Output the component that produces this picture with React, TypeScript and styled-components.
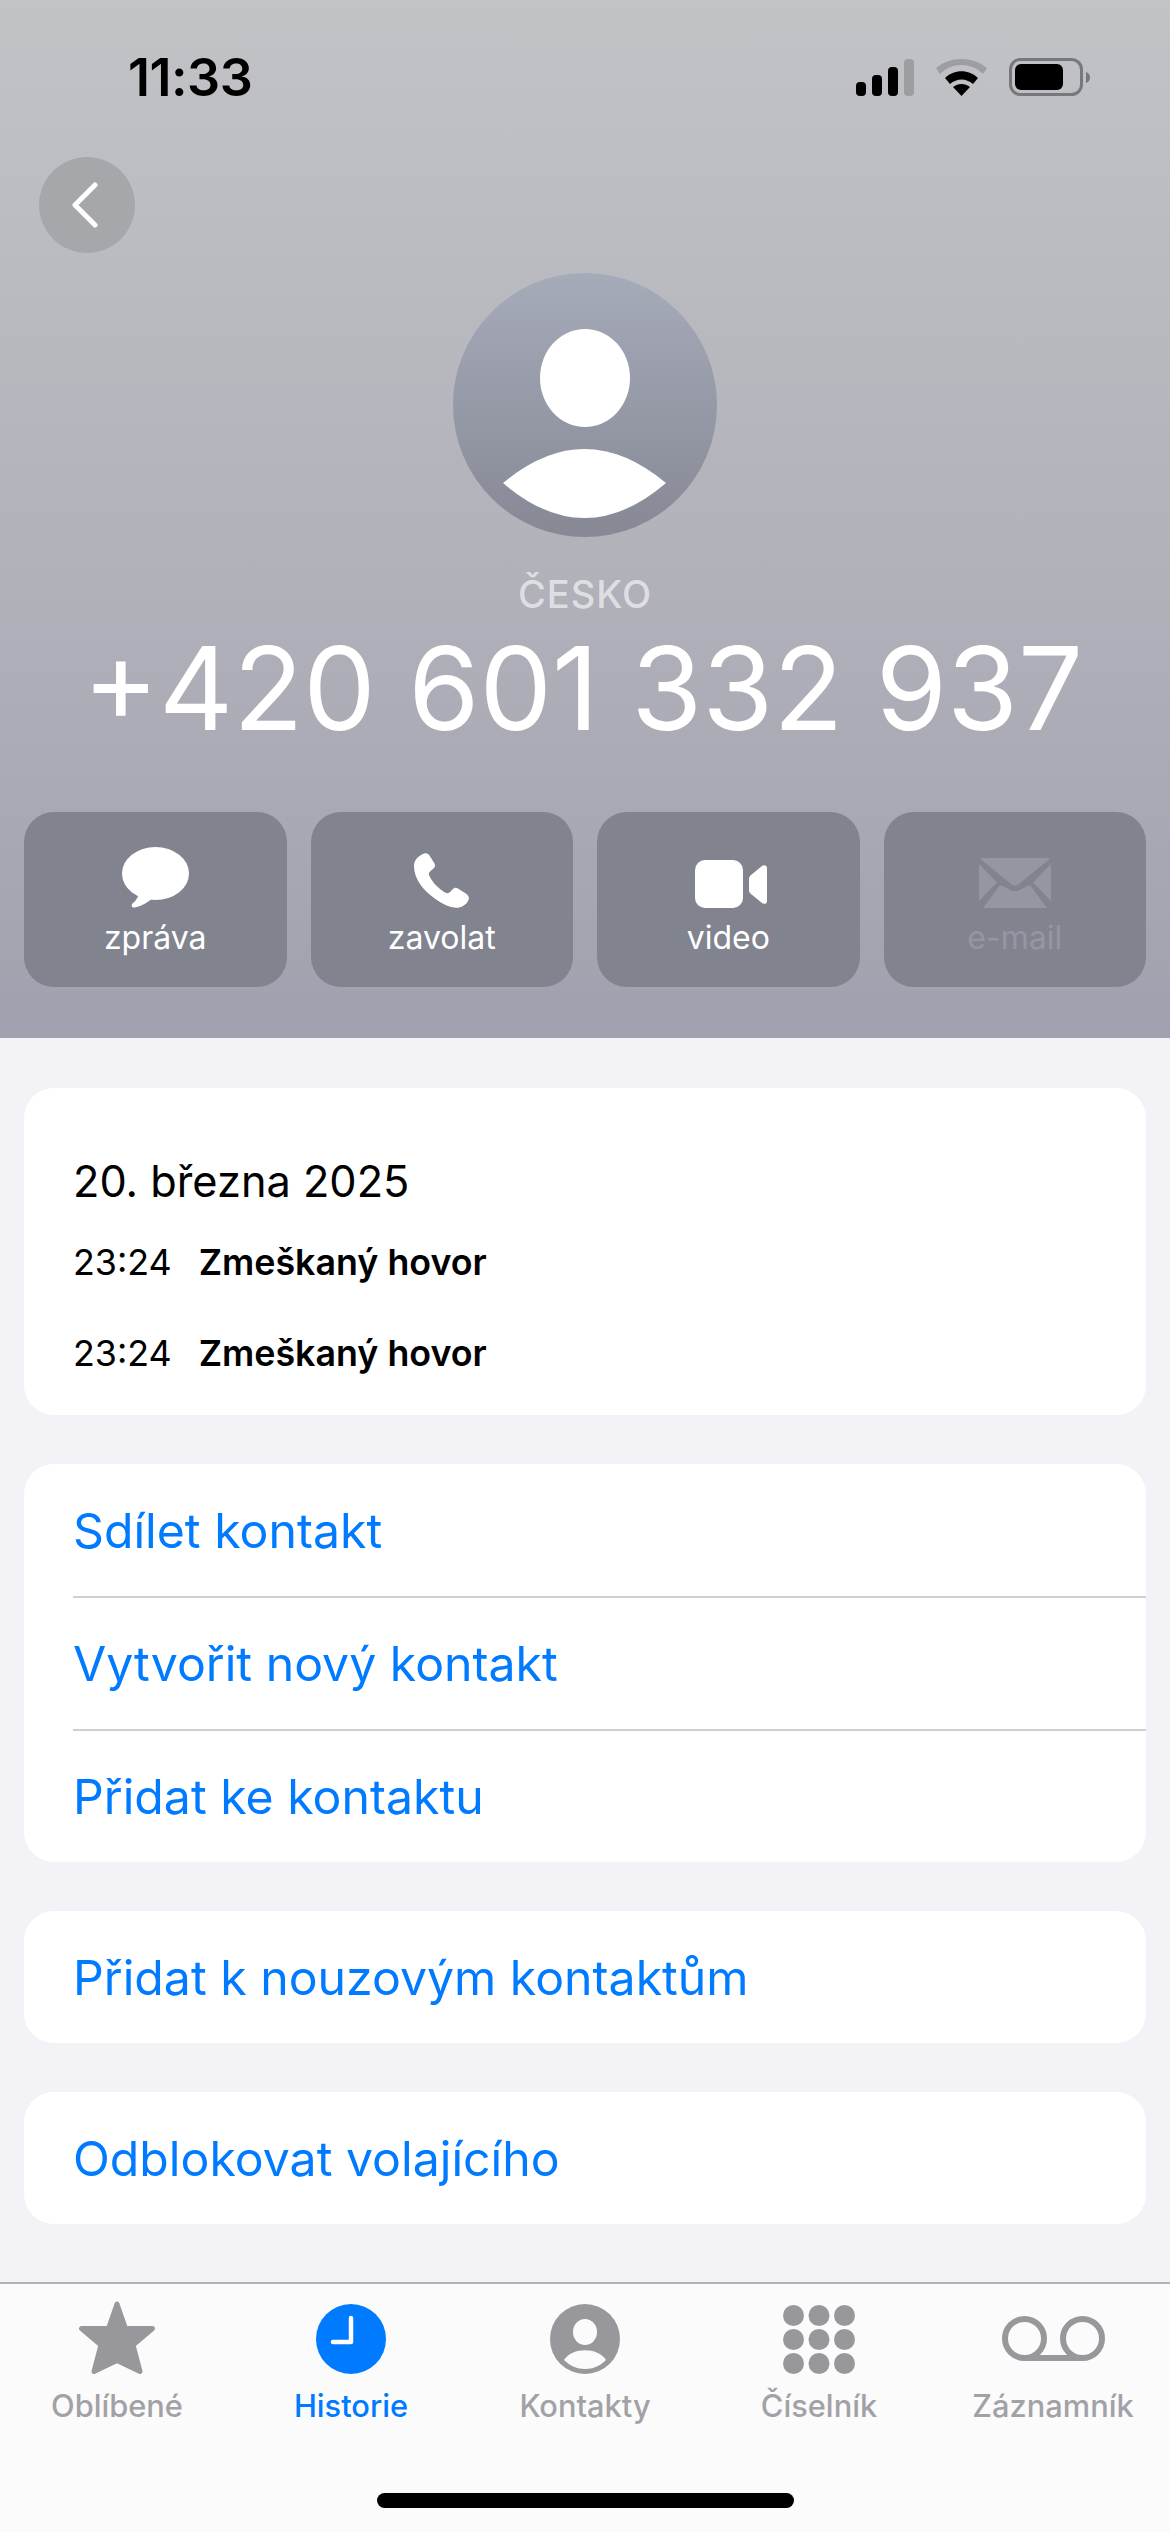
import styled, { createGlobalStyle } from 'styled-components';

const GlobalStyle = createGlobalStyle`
  html, body {
    margin: 0;
    padding: 0;
    background: #f2f2f7;
  }
  * {
    box-sizing: border-box;
  }
`;

const Screen = styled.div`
  width: 1170px;
  height: 2532px;
  display: flex;
  flex-direction: column;
  overflow: hidden;
  font-family: Inter, 'Liberation Sans', sans-serif;
  background: #f2f2f7;
`;

const Header = styled.header`
  height: 1038px;
  padding: 0 24px;
  flex-shrink: 0;
  display: flex;
  flex-direction: column;
  background: linear-gradient(180deg, #c2c3c7 0%, #b4b5bc 45%, #a0a1ae 100%);
`;

const StatusBar = styled.div`
  height: 157px;
  padding: 50px 55px 0 104px;
  display: flex;
  justify-content: space-between;
  align-items: flex-start;
`;

const Clock = styled.div`
  font-size: 52px;
  line-height: 56px;
  font-weight: 600;
  letter-spacing: -0.5px;
  color: #000;
`;

const StatusIcons = styled.div`
  display: flex;
  align-items: center;
  gap: 22px;
  margin-top: 8px;
`;

const BackButton = styled.div`
  width: 96px;
  height: 96px;
  margin-left: 15px;
  border-radius: 50%;
  background: #a6a7ab;
  display: flex;
  align-items: center;
  justify-content: center;
`;

const AvatarWrap = styled.div`
  margin-top: 20px;
  height: 264px;
  display: flex;
  justify-content: center;
`;

const Region = styled.div`
  margin-top: 34px;
  text-align: center;
  font-size: 38px;
  line-height: 46px;
  font-weight: 500;
  letter-spacing: 1px;
  color: rgba(255, 255, 255, 0.6);
`;

const PhoneNumber = styled.div`
  margin-top: 7px;
  margin-left: -4px;
  text-align: center;
  font-size: 115px;
  line-height: 130px;
  font-weight: 400;
  white-space: nowrap;
  color: #fff;
`;

const Actions = styled.div`
  margin-top: 58px;
  display: grid;
  grid-template-columns: repeat(4, 1fr);
  gap: 24px;
`;

const ActionButton = styled.div<{ $disabled?: boolean }>`
  height: 175px;
  border-radius: 30px;
  background: #81838f;
  display: flex;
  flex-direction: column;
  align-items: center;
  color: ${(p) => (p.$disabled ? '#9596a2' : '#fff')};
`;

const ActionIcon = styled.div`
  height: 96px;
  width: 100%;
  display: flex;
  align-items: flex-end;
  justify-content: center;
`;

const ActionLabel = styled.div`
  margin-top: 12px;
  font-size: 32px;
  line-height: 36px;
`;

const Main = styled.main`
  flex: 1;
  padding: 50px 24px 0;
  display: flex;
  flex-direction: column;
  gap: 49px;
`;

const Card = styled.section`
  background: #fff;
  border-radius: 30px;
  overflow: hidden;
`;

const HistoryCard = styled(Card)`
  height: 327px;
  padding: 67px 49px 0;
`;

const DateTitle = styled.div`
  font-size: 43.3px;
  line-height: 52px;
  color: #000;
  margin-bottom: 9px;
`;

const CallRow = styled.div`
  height: 91px;
  display: flex;
  align-items: center;
  gap: 27px;
  font-size: 35.8px;
`;

const CallTime = styled.span`
  color: #000;
`;

const CallType = styled.span`
  font-weight: 600;
  color: #000;
`;

const LinkRow = styled.div`
  height: 132px;
  margin-left: 49px;
  display: flex;
  align-items: center;
  font-size: 48.2px;
  color: #007aff;
  & + & {
    height: 133px;
    border-top: 2px solid #d0d0d3;
  }
`;

const TabBar = styled.nav`
  height: 250px;
  flex-shrink: 0;
  position: relative;
  background: #fbfbfc;
  border-top: 2px solid #b1b1b6;
  display: grid;
  grid-template-columns: repeat(5, 1fr);
`;

const Tab = styled.div<{ $active?: boolean }>`
  display: flex;
  flex-direction: column;
  align-items: center;
  color: ${(p) => (p.$active ? '#007aff' : '#a2a2a6')};
`;

const TabIcon = styled.div`
  height: 90px;
  width: 100%;
  display: flex;
  align-items: flex-end;
  justify-content: center;
`;

const TabLabel = styled.div`
  margin-top: 14px;
  font-size: 30.8px;
  line-height: 36px;
  font-weight: 500;
`;

const HomeBar = styled.div`
  position: absolute;
  left: 377px;
  bottom: 24px;
  width: 417px;
  height: 15px;
  border-radius: 8px;
  background: #000;
`;

const GRAY = '#98989c';

const SignalIcon = () => (
  <svg width="58" height="37" viewBox="0 0 58 37">
    <rect x="0" y="23" width="10" height="14" rx="4" fill="#000" />
    <rect x="16" y="16" width="10" height="21" rx="4" fill="#000" />
    <rect x="32" y="8" width="10" height="29" rx="4" fill="#000" />
    <rect x="48" y="0" width="10" height="37" rx="4" fill="#9d9ea2" />
  </svg>
);

const WifiIcon = () => (
  <svg width="51" height="37" viewBox="0 0 51 37">
    <path d="M0 9 C14 -3 37 -3 51 9 L47 15 C35 3 16 3 4 15 Z" fill="#9d9ea2" />
    <path d="M9 19 C18 10 33 10 42 19 L37 25 C30 19 21 19 14 25 Z" fill="#000" />
    <path d="M17 28 C22 24 29 24 34 28 L25.5 37 Z" fill="#000" />
  </svg>
);

const BatteryIcon = () => (
  <svg width="82" height="38" viewBox="0 0 82 38">
    <rect x="1.5" y="1.5" width="71" height="35" rx="10" fill="none" stroke="#77787c" strokeWidth="3" />
    <rect x="6" y="6" width="48" height="26" rx="6" fill="#000" />
    <path d="M77 14 C80 15 81 17 81 19.5 C81 22 80 24 77 25 Z" fill="#77787c" />
  </svg>
);

const ChevronIcon = () => (
  <svg width="30" height="50" viewBox="0 0 30 50">
    <path d="M23 5 L3 25 L23 45" fill="none" stroke="#fff" strokeWidth="5" strokeLinecap="round" strokeLinejoin="round" />
  </svg>
);

const AvatarIcon = () => (
  <svg width="264" height="264" viewBox="0 0 264 264">
    <defs>
      <linearGradient id="avatarFill" x1="0" y1="0" x2="0" y2="1">
        <stop offset="0" stopColor="#a6abba" />
        <stop offset="1" stopColor="#868894" />
      </linearGradient>
    </defs>
    <circle cx="132" cy="132" r="132" fill="url(#avatarFill)" />
    <ellipse cx="132" cy="105" rx="45" ry="49" fill="#fff" />
    <path d="M50 210 Q131.5 142 213 210 Q131.5 280 50 210 Z" fill="#fff" />
  </svg>
);

const BubbleIcon = () => (
  <svg width="67" height="61" viewBox="0 0 67 61">
    <ellipse cx="33.5" cy="26.5" rx="33.5" ry="26.5" fill="#fff" />
    <path d="M18 44 C17 49 14 54 10 57 C9 59 10 61 13 60.5 C20 59 26 55 31 51 Z" fill="#fff" />
  </svg>
);

const PhoneIcon = () => (
  <svg width="55" height="55" viewBox="0 0 55 55">
    <path
      d="M11 0.3 C13 0 14.5 1 15.5 2.5 L20.5 10.5 C21.5 12.5 21 14 19.5 15.5 L16 18.5 C14.5 20 14.5 21.5 15.5 23 C18 29 25 36 31 39.5 C33 40.5 35 40.5 36.5 38.5 L39 36 C40.5 34.5 42 34.5 44 35.5 L52.5 41 C55 43 55.5 45.5 54 48 C52 52 47 55 42 54.8 C32 54.5 18 45 9 35 C3 28 0 20 0 13 C0 8 3 3 11 0.3 Z"
      fill="#fff"
    />
  </svg>
);

const VideoIcon = () => (
  <svg width="78" height="48" viewBox="-6 0 78 48">
    <rect x="0" y="0" width="48" height="48" rx="10" fill="#fff" />
    <path d="M54 19 C54 17 55 16 56 15 L67 6 C69 4.5 72 5 72 8 L72 41 C72 44 69 44.5 67 43 L56 34 C55 33 54 32 54 30 Z" fill="#fff" />
  </svg>
);

const MailIcon = () => (
  <svg width="72" height="50" viewBox="0 0 72 50" fill="#9596a2">
    <path d="M3 0 H69 C70 0 70.5 1 70 1.5 L40 26 C37.5 28 34.5 28 32 26 L2 1.5 C1.5 1 2 0 3 0 Z" />
    <path d="M0 6 L18 24.5 L0 43 Z" />
    <path d="M72 6 L54 24.5 L72 43 Z" />
    <path d="M4 50 L21 27 L29.5 31 C33 34 39 34 42.5 31 L51 27 L68 50 Z" />
  </svg>
);

const StarIcon = () => (
  <svg width="76" height="73" viewBox="0 0 76 73">
    <path
      d="M38 3 L46.5 27.5 L73.5 27.5 L54 44 L61 70.5 L38 59.5 L15 70.5 L22 44 L2.5 27.5 L29.5 27.5 Z"
      fill={GRAY}
      stroke={GRAY}
      strokeWidth="5"
      strokeLinejoin="round"
    />
  </svg>
);

const ClockIcon = () => (
  <svg width="70" height="70" viewBox="0 0 70 70">
    <circle cx="35" cy="35" r="35" fill="#007aff" />
    <path d="M35 14 V38 H17" fill="none" stroke="#fff" strokeWidth="4.5" strokeLinecap="round" strokeLinejoin="round" />
  </svg>
);

const ContactIcon = () => (
  <svg width="70" height="70" viewBox="0 0 70 70">
    <circle cx="35" cy="35" r="35" fill={GRAY} />
    <ellipse cx="35" cy="28" rx="12" ry="13" fill="#fbfbfc" />
    <path d="M14 56 C22 43 48 43 56 56 C50 62 43 65 35 65 C27 65 20 62 14 56 Z" fill="#fbfbfc" />
  </svg>
);

const KeypadIcon = () => (
  <svg width="72" height="69" viewBox="0 0 72 69" fill={GRAY}>
    {[0, 1, 2].flatMap((row) =>
      [0, 1, 2].map((col) => (
        <ellipse key={`${row}-${col}`} cx={10.5 + col * 25.5} cy={10.5 + row * 24} rx="10.5" ry="10.5" />
      )),
    )}
  </svg>
);

const VoicemailIcon = () => (
  <svg width="103" height="58" viewBox="0 0 103 58">
    <circle cx="22.5" cy="22.5" r="19.5" fill="none" stroke={GRAY} strokeWidth="6" />
    <circle cx="80.5" cy="22.5" r="19.5" fill="none" stroke={GRAY} strokeWidth="6" />
    <path d="M22.5 42 H80.5" stroke={GRAY} strokeWidth="6" />
  </svg>
);

const actions = [
  { label: 'zpráva', icon: <BubbleIcon /> },
  { label: 'zavolat', icon: <PhoneIcon /> },
  { label: 'video', icon: <VideoIcon /> },
  { label: 'e-mail', icon: <MailIcon />, disabled: true },
];

const tabs = [
  { label: 'Oblíbené', icon: <StarIcon /> },
  { label: 'Historie', icon: <ClockIcon />, active: true },
  { label: 'Kontakty', icon: <ContactIcon /> },
  { label: 'Číselník', icon: <KeypadIcon /> },
  { label: 'Záznamník', icon: <VoicemailIcon /> },
];

const App = () => {
  return (
    <>
      <GlobalStyle />
      <Screen>
        <Header>
          <StatusBar>
            <Clock>11:33</Clock>
            <StatusIcons>
              <SignalIcon />
              <WifiIcon />
              <BatteryIcon />
            </StatusIcons>
          </StatusBar>
          <BackButton>
            <ChevronIcon />
          </BackButton>
          <AvatarWrap>
            <AvatarIcon />
          </AvatarWrap>
          <Region>ČESKO</Region>
          <PhoneNumber>+420 601 332 937</PhoneNumber>
          <Actions>
            {actions.map((a) => (
              <ActionButton key={a.label} $disabled={a.disabled}>
                <ActionIcon>{a.icon}</ActionIcon>
                <ActionLabel>{a.label}</ActionLabel>
              </ActionButton>
            ))}
          </Actions>
        </Header>
        <Main>
          <HistoryCard>
            <DateTitle>20. března 2025</DateTitle>
            <CallRow>
              <CallTime>23:24</CallTime>
              <CallType>Zmeškaný hovor</CallType>
            </CallRow>
            <CallRow>
              <CallTime>23:24</CallTime>
              <CallType>Zmeškaný hovor</CallType>
            </CallRow>
          </HistoryCard>
          <Card>
            <LinkRow>Sdílet kontakt</LinkRow>
            <LinkRow>Vytvořit nový kontakt</LinkRow>
            <LinkRow>Přidat ke kontaktu</LinkRow>
          </Card>
          <Card>
            <LinkRow>Přidat k nouzovým kontaktům</LinkRow>
          </Card>
          <Card>
            <LinkRow>Odblokovat volajícího</LinkRow>
          </Card>
        </Main>
        <TabBar>
          {tabs.map((t) => (
            <Tab key={t.label} $active={t.active}>
              <TabIcon>{t.icon}</TabIcon>
              <TabLabel>{t.label}</TabLabel>
            </Tab>
          ))}
          <HomeBar />
        </TabBar>
      </Screen>
    </>
  );
};

export default App;
